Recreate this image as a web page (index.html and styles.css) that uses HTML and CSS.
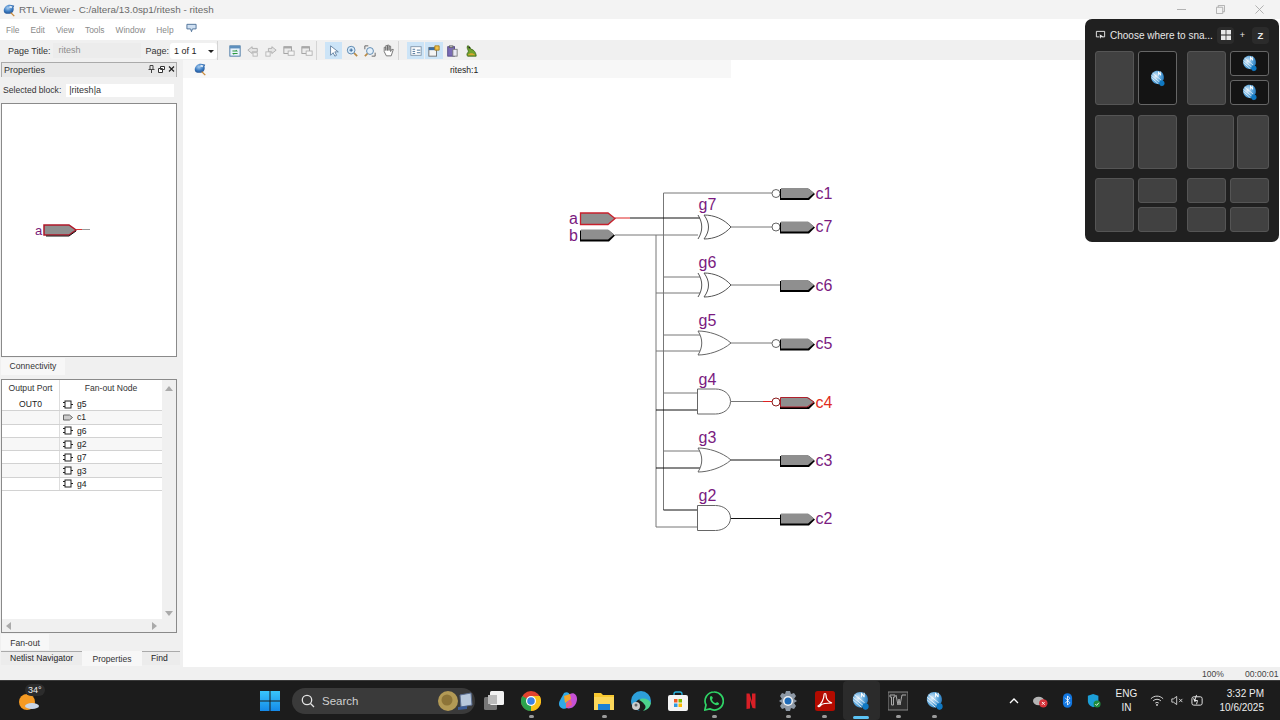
FILE: index.html
```html
<!DOCTYPE html>
<html lang="en">
<head>
<meta charset="utf-8">
<title>RTL Viewer</title>
<link rel="stylesheet" href="styles.css">
</head>
<body>
<svg class="defs" aria-hidden="true">
  <defs>
    <radialGradient id="globe" cx="40%" cy="35%" r="70%">
      <stop offset="0" stop-color="#a9cdf0"/><stop offset=".55" stop-color="#3f7fc4"/><stop offset="1" stop-color="#1c4a8c"/>
    </radialGradient>
    <radialGradient id="globeb" cx="35%" cy="35%" r="75%">
      <stop offset="0" stop-color="#e4f0fa"/><stop offset=".5" stop-color="#5ba6dc"/><stop offset="1" stop-color="#1669ae"/>
    </radialGradient>
    <linearGradient id="chip" x1="0" y1="0" x2="0" y2="1"><stop offset="0" stop-color="#39c6fb"/><stop offset="1" stop-color="#1489e8"/></linearGradient>
    <symbol id="bird" viewBox="0 0 16 16">
      <path d="M2 9c0-4 3-7 7-7 2 0 4 1 5 1l-1 2c1 2 0 6-3 7-4 1-8 0-8-3z" fill="url(#globe)"/>
      <path d="M9 3l3 1-1 2-3-1z" fill="#dbe8f6"/>
      <path d="M10 11l4 4" stroke="#c98a3a" stroke-width="1.6"/>
    </symbol>
    <symbol id="quartus" viewBox="0 0 20 22">
      <path d="M1 9c0-5 4-8 8-8 4 0 7 2 8 5 1 3 1 6-1 8l2 4-3 3-3-3c-6 1-11-3-11-9z" fill="url(#globeb)"/>
      <path d="M1.500 10l9 8M1.500 7l11 9M3 4l11 9" stroke="#fff" stroke-width="1" opacity=".85"/>
      <path d="M10 2v5h1V4.500l2 2.500h1V2h-1v3l-2-3z" fill="#fff"/>
      <circle cx="15" cy="17" r="3.400" fill="#0f78c2"/>
    </symbol>
    <symbol id="gate-ic" viewBox="0 0 10 9">
      <rect x="2" y="1" width="6" height="7" fill="#fff" stroke="#222" stroke-width="1"/>
      <path d="M0 2.500h2M0 6.500h2M8 4.500h2" stroke="#222" stroke-width="1"/>
    </symbol>
    <symbol id="port-ic" viewBox="0 0 10 7">
      <path d="M.5 1h6l3 2.500-3 2.500h-6z" fill="#ccc" stroke="#666"/>
    </symbol>
    <symbol id="tb-page" viewBox="0 0 14 14">
      <rect x="1" y="1" width="12" height="12" fill="#e8f2fb" stroke="#3d6f9e"/>
      <rect x="1" y="1" width="12" height="3" fill="#5d8fbe"/>
      <path d="M4 7h5l-1-1M10 10H5l1 1" stroke="#2d9a3d" stroke-width="1.200" fill="none"/>
    </symbol>
    <symbol id="tb-left" viewBox="0 0 14 14">
      <path d="M1 6l5-4v2h6v4H6v2z" fill="#e4e4e4" stroke="#aaa"/><rect x="7" y="9" width="5" height="4" fill="#f2f2f2" stroke="#b4b4b4"/>
    </symbol>
    <symbol id="tb-right" viewBox="0 0 14 14">
      <path d="M13 6L8 2v2H4v4h4v2z" fill="#e4e4e4" stroke="#aaa"/><rect x="1" y="8" width="5" height="5" fill="#f2f2f2" stroke="#b4b4b4"/>
    </symbol>
    <symbol id="tb-box" viewBox="0 0 14 14">
      <rect x="1" y="2" width="9" height="8" fill="#ececec" stroke="#999"/><rect x="1" y="2" width="9" height="2" fill="#a8a8a8"/><rect x="6" y="7" width="7" height="5" fill="#f5f5f5" stroke="#b0b0b0"/>
    </symbol>
    <symbol id="tb-cursor" viewBox="0 0 14 14">
      <path d="M3 1v11l3-3 2 4 2-1-2-4h4z" fill="#fff" stroke="#5b7a9a"/>
    </symbol>
    <symbol id="tb-zoomin" viewBox="0 0 14 14">
      <circle cx="6" cy="6" r="4.500" fill="#d9ebfa" stroke="#4d7da8"/><path d="M4 6h4M6 4v4" stroke="#24568a"/><path d="M9.500 9.500l3.500 3.500" stroke="#b98a45" stroke-width="2"/>
    </symbol>
    <symbol id="tb-zoomfit" viewBox="0 0 14 14">
      <circle cx="7" cy="7" r="4" fill="#e4f0fa" stroke="#4d7da8"/><path d="M1 5V1h4M13 9v4H9" stroke="#555" fill="none"/><path d="M4 10l-3 3" stroke="#b98a45" stroke-width="2"/>
    </symbol>
    <symbol id="tb-hand" viewBox="0 0 14 14">
      <path d="M3 8V4h1.500v3V2.500h1.500V7V2h1.500v5V3h1.500v5l1-2h1.500l-2 6H5z" fill="#fff" stroke="#666" stroke-width=".8"/>
    </symbol>
    <symbol id="tb-list" viewBox="0 0 14 14">
      <rect x="1" y="2" width="12" height="10" fill="#fff" stroke="#7b8fa3"/><path d="M3 5h3M3 7.500h3M3 10h3M8 6h4M8 9h4" stroke="#38658f"/>
    </symbol>
    <symbol id="tb-prop" viewBox="0 0 14 14">
      <rect x="1" y="3" width="9" height="10" fill="#f4f4f4" stroke="#666"/><rect x="1" y="3" width="9" height="3" fill="#3a6ea5"/><path d="M8 1h5v5H8z" fill="#f1c24a" stroke="#a47b1a"/>
    </symbol>
    <symbol id="tb-clip" viewBox="0 0 14 14">
      <rect x="2" y="2" width="8" height="11" fill="#7a6bb5" stroke="#4f4384"/><rect x="8" y="5" width="5" height="8" fill="#e9e9f4" stroke="#777"/><rect x="4" y="1" width="4" height="2" fill="#ccc" stroke="#666"/>
    </symbol>
    <symbol id="tb-frog" viewBox="0 0 14 14">
      <path d="M3 1c2 0 3 2 4 4 3 0 6 4 6 8H3c-2-3 1-4 1-6-1-2-2-4-1-6z" fill="#6fa32f" stroke="#3b6514"/><circle cx="5" cy="3" r="1" fill="#222"/><path d="M3 12c3-3 6-3 9 0z" fill="#d9a82e"/>
    </symbol>
  </defs>
</svg>

<div class="app">
  <header class="titlebar">
    <svg class="title-icon"><use href="#bird"/></svg>
    <span class="title-text">RTL Viewer - C:/altera/13.0sp1/ritesh - ritesh</span>
    <div class="win-controls">
      <svg class="win-btn" viewBox="0 0 10 10"><path d="M0 5h10" stroke="#aaa"/></svg>
      <svg class="win-btn" viewBox="0 0 10 10"><path d="M.5 2.500h7v7h-7zM2.500 2.500v-2h7v7h-2" fill="none" stroke="#aaa"/></svg>
      <svg class="win-btn" viewBox="0 0 10 10"><path d="M.5.500l9 9M9.500.500l-9 9" stroke="#aaa"/></svg>
    </div>
  </header>

  <nav class="menubar">
    <span>File</span><span>Edit</span><span>View</span><span>Tools</span><span>Window</span><span>Help</span>
    <svg class="menu-icon" viewBox="0 0 12 10"><path d="M1 1h10v5H7L6 9 5 6H1z" fill="#cfe0f2" stroke="#4b6f96"/></svg>
  </nav>

  <div class="toolbar">
    <div class="tb-group tb-page-title">
      <span class="tb-label">Page Title:</span>
      <span class="tb-field">ritesh</span>
      <span class="tb-label tb-page-label">Page:</span>
      <span class="tb-select">1 of 1<i class="caret"></i></span>
    </div>
    <div class="tb-group tb-nav">
      <svg class="tb-ic"><use href="#tb-page"/></svg>
      <svg class="tb-ic"><use href="#tb-left"/></svg>
      <svg class="tb-ic"><use href="#tb-right"/></svg>
      <svg class="tb-ic"><use href="#tb-box"/></svg>
      <svg class="tb-ic"><use href="#tb-box"/></svg>
    </div>
    <div class="tb-group tb-tools">
      <span class="tb-btn on"><svg class="tb-ic"><use href="#tb-cursor"/></svg></span>
      <span class="tb-btn"><svg class="tb-ic"><use href="#tb-zoomin"/></svg></span>
      <span class="tb-btn"><svg class="tb-ic"><use href="#tb-zoomfit"/></svg></span>
      <span class="tb-btn"><svg class="tb-ic big"><use href="#tb-hand"/></svg></span>
    </div>
    <div class="tb-group tb-views">
      <span class="tb-btn on"><svg class="tb-ic"><use href="#tb-list"/></svg></span>
      <span class="tb-btn on"><svg class="tb-ic"><use href="#tb-prop"/></svg></span>
      <span class="tb-btn"><svg class="tb-ic"><use href="#tb-clip"/></svg></span>
      <span class="tb-btn"><svg class="tb-ic"><use href="#tb-frog"/></svg></span>
    </div>
  </div>

  <main class="workspace">
    <aside class="sidebar">
      <div class="panel-head">
        <span>Properties</span>
        <span class="panel-btns">
          <svg viewBox="0 0 7 8"><path d="M2 .5h3v4H2zM.5 4.500h6M3.500 4.500V8" fill="none" stroke="#444"/></svg>
          <svg viewBox="0 0 7 8"><path d="M2.500 1.500h4v3h-4zM.5 3.500h4v4h-4z" fill="#fff" stroke="#333"/></svg>
          <svg viewBox="0 0 7 8"><path d="M1 1.500l5 5M6 1.500l-5 5" stroke="#222" stroke-width="1.200"/></svg>
        </span>
      </div>
      <div class="selected-row">
        <span>Selected block:</span>
        <span class="selected-field">|ritesh|a</span>
      </div>
      <div class="preview">
        <svg class="preview-svg" viewBox="0 0 174 252">
          <text x="33" y="131" class="pv-label">a</text>
          <path d="M42 121h25l7 5-7 5H42z" fill="#8f8f8f" stroke="#b0182a" stroke-width="1.500"/>
          <path d="M44 132h23l7-5" fill="none" stroke="#111"/>
          <path d="M74 125.500h14" stroke="#999"/>
          <path d="M74 125.500h6" stroke="#d33"/>
        </svg>
      </div>
      <div class="tab-row">
        <span class="tab-up">Connectivity</span>
      </div>
      <div class="table-box">
        <div class="table-main">
          <div class="table-scroll">
            <div class="t-head"><span class="c1">Output Port</span><span class="c2">Fan-out Node</span></div>
            <div class="t-row"><span class="c1">OUT0</span><span class="c2n"><svg class="node-ic"><use href="#gate-ic"/></svg>g5</span></div>
            <div class="t-row alt"><span class="c1"></span><span class="c2n"><svg class="node-ic"><use href="#port-ic"/></svg>c1</span></div>
            <div class="t-row"><span class="c1"></span><span class="c2n"><svg class="node-ic"><use href="#gate-ic"/></svg>g6</span></div>
            <div class="t-row alt"><span class="c1"></span><span class="c2n"><svg class="node-ic"><use href="#gate-ic"/></svg>g2</span></div>
            <div class="t-row"><span class="c1"></span><span class="c2n"><svg class="node-ic"><use href="#gate-ic"/></svg>g7</span></div>
            <div class="t-row alt"><span class="c1"></span><span class="c2n"><svg class="node-ic"><use href="#gate-ic"/></svg>g3</span></div>
            <div class="t-row"><span class="c1"></span><span class="c2n"><svg class="node-ic"><use href="#gate-ic"/></svg>g4</span></div>
          </div>
          <div class="v-scroll"><i class="arr-up"></i><i class="arr-down"></i></div>
        </div>
        <div class="h-scroll"><i class="arr-left"></i><i class="arr-right"></i></div>
      </div>
      <div class="tab-row tab-row-b">
        <span class="tab-up fanout">Fan-out</span>
      </div>
      <div class="bottom-tabs">
        <span class="btab">Netlist Navigator</span>
        <span class="btab active">Properties</span>
        <span class="btab">Find</span>
      </div>
    </aside>

    <section class="canvas">
      <div class="doc-tabs">
        <svg class="doc-icon"><use href="#bird"/></svg>
        <span class="doc-title">ritesh:1</span>
      </div>
      <svg class="schematic" viewBox="183 78 1097 589">
        <defs>
          <g id="port">
            <path d="M0 1h29l6 5-6 6H0z" fill="#000"/>
            <path d="M1 0h27l6 5-6 5H1z" fill="#8f8f8f"/>
          </g>
          <g id="bubble"><circle cx="4" cy="0" r="4" fill="#fff" stroke="#666"/></g>
          <g id="or-gate" fill="#fff" stroke="#666">
            <path d="M0 0c10 0 24 4 33 12C24 20 10 24 0 24c5-8 5-16 0-24z"/>
          </g>
          <g id="xor-gate" fill="none" stroke="#555">
            <path d="M6 0c10 0 20 4 27 12C26 20 16 24 6 24c6-8 6-16 0-24z" fill="#fff"/>
            <path d="M0 0c5 8 5 16 0 24"/>
          </g>
          <g id="and-gate" fill="#fff" stroke="#666">
            <path d="M0 0h18c8 0 15 5 15 12.500S26 25 18 25H0z"/>
          </g>
        </defs>

        <g class="wire">
          <path d="M656 235V527H697M663.500 193V510M663.500 193H772"/>
          <path d="M615 235H698M663.500 277H700M656 293H700M663.500 335H700M656 351H700M663.500 393H697"/>
          <path d="M663.500 451H700M731 227H772M731 285H780M731 343H772M731 401.500H764"/>
        </g>
        <g class="wire-dark">
          <path d="M630 218H700M656 410H697M656 468H700M663.500 510H697M731 460H780M731 518.500H780"/>
        </g>
        <path d="M615 218H630M763 401.500H772" class="wire-red"/>

        <use href="#xor-gate" x="698" y="215"/>
        <use href="#xor-gate" x="698" y="273"/>
        <use href="#or-gate" x="698" y="331"/>
        <use href="#and-gate" x="697.500" y="389"/>
        <use href="#or-gate" x="698" y="448"/>
        <use href="#and-gate" x="697.500" y="505.500"/>

        <use href="#bubble" x="772" y="193.500"/>
        <use href="#bubble" x="772" y="227"/>
        <use href="#bubble" x="772" y="343.500"/>
        <circle cx="776" cy="402" r="4" fill="#fff" stroke="#8c1c1c"/>

        <use href="#port" x="580" y="229.500"/>
        <use href="#port" x="780" y="188"/>
        <use href="#port" x="780" y="221.500"/>
        <use href="#port" x="780" y="280"/>
        <use href="#port" x="780" y="338.500"/>
        <use href="#port" x="780" y="397"/>
        <use href="#port" x="780" y="455"/>
        <use href="#port" x="780" y="513.500"/>
        <path d="M580.500 213H608l7 5.500-7 6H580.500z" fill="#8f8f8f" stroke="#c8202c" stroke-width="1.300"/>
        <path d="M780.500 397.500H807l7 4.500-7 5H780.500z" fill="none" stroke="#b0202c"/>

        <g class="lbl">
          <text x="569" y="224">a</text><text x="569" y="241">b</text>
          <text x="698.500" y="210">g7</text><text x="698.500" y="268">g6</text><text x="698.500" y="326">g5</text>
          <text x="698.500" y="385">g4</text><text x="698.500" y="443">g3</text><text x="698.500" y="501">g2</text>
          <text x="815.500" y="199">c1</text><text x="815.500" y="232">c7</text><text x="815.500" y="291">c6</text>
          <text x="815.500" y="349">c5</text><text x="815.500" y="407.500" class="lbl-red">c4</text><text x="815.500" y="466">c3</text><text x="815.500" y="524">c2</text>
        </g>
      </svg>
    </section>
  </main>

  <div class="statusbar">
    <span class="st-zoom">100%</span>
    <span class="st-time">00:00:01</span>
  </div>

  <footer class="taskbar">
    <div class="weather">
      <svg class="weather-ic" viewBox="0 0 22 20">
        <circle cx="9" cy="11" r="8" fill="#f59a23"/>
        <ellipse cx="14" cy="15" rx="7" ry="3" fill="#c9d6e8"/>
      </svg>
      <span class="weather-t">34°</span>
    </div>
    <svg class="tk-win" viewBox="0 0 20 20">
      <path d="M0 0h9.500v9.500H0zM10.500 0H20v9.500h-9.500zM0 10.500h9.500V20H0zM10.500 10.500H20V20h-9.500z" fill="url(#chip)"/>
    </svg>
    <div class="search">
      <svg class="search-ic" viewBox="0 0 14 14"><circle cx="6" cy="6" r="4.700" fill="none" stroke="#e4e4e4" stroke-width="1.300"/><path d="M9.500 9.500l3.500 3.500" stroke="#e4e4e4" stroke-width="1.300"/></svg>
      <span>Search</span>
      <span class="bing">
        <svg viewBox="0 0 36 22" class="bing-ic">
          <circle cx="11" cy="11" r="10" fill="#b39a55"/><circle cx="10" cy="10" r="5.500" fill="#8d7438"/>
          <path d="M23 5l11-2 1 12-11 2z" fill="#b8c8dc" stroke="#5c6f92"/><path d="M21 17l9-1v3l-9 1z" fill="#3c5c96"/>
        </svg>
      </span>
    </div>
    <div class="tk-apps">
      <span class="tk-app"><svg viewBox="0 0 20 20"><rect y="6" width="13" height="13" rx="1.500" fill="#777"/><rect x="6" width="14" height="14" rx="1.500" fill="#f2f2f2"/><rect x="4" y="4" width="9" height="9" fill="#bbb"/></svg></span>
      <span class="tk-app open"><svg viewBox="0 0 20 20"><circle cx="10" cy="10" r="10" fill="#e2442f"/><path d="M10 10v10a10 10 0 0 0 8.700-15H10z" fill="#f7c21a"/><path d="M10 10L1.300 5A10 10 0 0 0 10 20z" fill="#2ba24c"/><circle cx="10" cy="10" r="5" fill="#fff"/><circle cx="10" cy="10" r="3.800" fill="#3b82e6"/></svg></span>
      <span class="tk-app"><svg viewBox="0 0 20 20"><path d="M6 2c3-2 6 0 6 3l-3 12c-3 2-8 0-8-4 0-3 2-5 5-11z" fill="#2fa9e8"/><path d="M12 3c4-2 7 1 7 5 0 3-2 8-6 9-3 1-5 0-5-1z" fill="#c651d6"/><path d="M6 5l6-2 1 5-6 4z" fill="#f4a52d"/><path d="M8 12l5-3 1 5-6 3z" fill="#ee5f7f"/></svg></span>
      <span class="tk-app open"><svg viewBox="0 0 20 20"><path d="M0 2h7l2 2h11v15H0z" fill="#f8c830"/><path d="M0 6h20v13H0z" fill="#fbd75b"/><rect x="4" y="13" width="12" height="6" fill="#1a7fd4"/></svg></span>
      <span class="tk-app"><svg viewBox="0 0 20 20"><path d="M0 10a10 10 0 0 1 20 0c0 3-3 4-6 4 2-2 1-6-3-6-5 0-7 3-6 7 1 3 3 5 6 5C5 20 0 16 0 10z" fill="#2d9fd9"/><path d="M8 9c4-3 10-1 12 3-1 5-4 7-8 8 2-2 4-4 1-7-1-2-3-3-5-4z" fill="#4cd28c"/><circle cx="5" cy="15" r="4" fill="#ccc"/><circle cx="5" cy="14" r="1.500" fill="#666"/></svg></span>
      <span class="tk-app"><svg viewBox="0 0 20 20"><path d="M6 5V3a2 2 0 0 1 2-2h4a2 2 0 0 1 2 2v2" fill="none" stroke="#28b4e0" stroke-width="1.300"/><rect y="4" width="20" height="16" rx="2" fill="#f4f4f4"/><rect x="6" y="8" width="3.500" height="3.500" fill="#f15a24"/><rect x="10.500" y="8" width="3.500" height="3.500" fill="#7fba00"/><rect x="6" y="12.500" width="3.500" height="3.500" fill="#2f9ae0"/><rect x="10.500" y="12.500" width="3.500" height="3.500" fill="#fdb900"/></svg></span>
      <span class="tk-app open"><svg viewBox="0 0 20 20"><path d="M10 1a9 9 0 0 0-8 13l-1.200 5 5-1.200A9 9 0 1 0 10 1z" fill="#1a1a1a" stroke="#2fd366" stroke-width="1.700"/><path d="M6 6c1-2 2-1 3 1l-1 1c0 2 2 4 4 4l1-1c2 1 3 2 1 3-4 1-9-4-8-8z" fill="#2fd366"/></svg></span>
      <span class="tk-app"><svg viewBox="0 0 20 20"><path d="M5.500 2.500h3l2.500 8v-8h3.500v15c-1 0-2-.3-3-.5l-2.500-8v8.500l-3.500.5z" fill="#d81f26"/></svg></span>
      <span class="tk-app open"><svg viewBox="0 0 20 20"><path d="M8 0h4l1 3 3-1 2 3-2 3 3 2-3 2 2 3-2 3-3-1-1 3H8l-1-3-3 1-2-3 2-3-3-2 3-2-2-3 2-3 3 1z" fill="#8e99a6"/><circle cx="10" cy="10" r="5" fill="#f2f2f2"/><circle cx="10" cy="10" r="3.500" fill="#1f6bb8"/></svg></span>
      <span class="tk-app open"><svg viewBox="0 0 20 20"><rect width="20" height="20" rx="2.500" fill="#b30b00"/><path d="M3 15c3-1 6-7 6-11 0-2 2-2 2 0 0 4 3 7 6 8-4 0-9 0-11 2-1 2-3 2-3 1z" fill="none" stroke="#fff" stroke-width="1.200"/></svg></span>
      <span class="tk-app active"><svg viewBox="0 0 20 22"><use href="#quartus"/></svg><i class="active-bar"></i></span>
      <span class="tk-app open"><svg viewBox="0 0 20 20"><rect y="1" width="20" height="18" fill="#2c2c2c" stroke="#888"/><path d="M2 4h5v2H5.500v8h-2V6H2zM8 4l2 10 1-6 1 6 2-10h4" fill="none" stroke="#aaa"/></svg></span>
      <span class="tk-app open"><svg viewBox="0 0 20 22"><use href="#quartus"/></svg></span>
    </div>
    <div class="tray">
      <svg class="tray-chev" viewBox="0 0 10 6"><path d="M1 5l4-4 4 4" fill="none" stroke="#fff" stroke-width="1.300"/></svg>
      <svg class="tray-ic tray-cloud" viewBox="0 0 16 14"><ellipse cx="6" cy="7" rx="6" ry="4.500" fill="#b4b4b4"/><circle cx="11" cy="9.500" r="4.500" fill="#d5333a"/><path d="M9.500 8l3 3M12.500 8l-3 3" stroke="#fff"/></svg>
      <svg class="tray-ic tray-bt" viewBox="0 0 12 16"><rect x="1" width="10" height="16" rx="5" fill="#1277e1"/><path d="M3.500 5l5 5.500L6 13V3l2.500 2.500-5 5.500" fill="none" stroke="#fff" stroke-width=".9"/></svg>
      <svg class="tray-ic tray-shield" viewBox="0 0 16 16"><path d="M1 2l6-2 6 2v6c0 4-3 6-6 7-3-1-6-3-6-7z" fill="#1c9fd8"/><circle cx="11.500" cy="11.500" r="4" fill="#1f8a3c"/><path d="M9.500 11.500l1.500 1.500 2.500-3" fill="none" stroke="#fff"/></svg>
      <span class="lang">ENG<br>IN</span>
      <svg class="tray-ic tray-wifi" viewBox="0 0 16 12"><path d="M1 4c4-4 10-4 14 0M3.500 6.500c2.500-2.500 6.500-2.500 9 0M6 9c1-1 3-1 4 0" fill="none" stroke="#eee"/><circle cx="8" cy="11" r="1" fill="#eee"/></svg>
      <svg class="tray-ic tray-vol" viewBox="0 0 16 12"><path d="M1 4h2l4-3v10L3 8H1z" fill="none" stroke="#eee"/><path d="M10 4l4 4M14 4l-4 4" stroke="#eee"/></svg>
      <svg class="tray-ic tray-batt" viewBox="0 0 14 14"><rect x="1" y="3" width="11" height="9" rx="2" fill="none" stroke="#eee"/><path d="M2 4l4 3-2 2z" fill="#eee"/><path d="M6 1l-2 6h3l-1 4" fill="none" stroke="#eee"/></svg>
      <div class="clock"><span>3:32 PM</span><span>10/6/2025</span></div>
    </div>
  </footer>

  <div class="snap">
    <div class="snap-head">
      <svg class="snap-ic" viewBox="0 0 12 11"><path d="M1.500 1h9v6h-3M5 7H1.500V1" fill="none" stroke="#eee"/><path d="M5 4l1 5 1-2 2-.5z" fill="#eee"/></svg>
      <span class="snap-title">Choose where to sna...</span>
      <span class="key"><svg class="key-win" viewBox="0 0 10 10"><path d="M0 0h4.600v4.600H0zM5.400 0H10v4.600H5.400zM0 5.400h4.600V10H0zM5.400 5.400H10V10H5.400z" fill="#e8e8e8"/></svg></span>
      <span class="plus">+</span>
      <span class="key">Z</span>
    </div>
    <div class="snap-grid">
      <div class="layout l-even">
        <div class="tile"></div>
        <div class="tile dark"><svg class="tile-ic"><use href="#quartus"/></svg></div>
      </div>
      <div class="layout l-stack">
        <div class="tile span2"></div>
        <div class="tile dark"><svg class="tile-ic"><use href="#quartus"/></svg></div>
        <div class="tile dark"><svg class="tile-ic"><use href="#quartus"/></svg></div>
      </div>
      <div class="layout l-even">
        <div class="tile"></div>
        <div class="tile"></div>
      </div>
      <div class="layout l-wide">
        <div class="tile"></div>
        <div class="tile"></div>
      </div>
      <div class="layout l-stack">
        <div class="tile span2"></div>
        <div class="tile"></div>
        <div class="tile"></div>
      </div>
      <div class="layout l-stack">
        <div class="tile"></div>
        <div class="tile"></div>
        <div class="tile"></div>
        <div class="tile"></div>
      </div>
    </div>
  </div>
</div>
</body>
</html>
```

FILE: styles.css
```css
* { box-sizing: border-box; }
html, body { margin: 0; padding: 0; }
body {
  width: 1280px;
  height: 720px;
  overflow: hidden;
  font-family: "Liberation Sans", Arial, sans-serif;
  font-size: 9px;
  color: #222;
  background: #fff;
}
.defs { position: absolute; width: 0; height: 0; }
.app { position: relative; width: 1280px; height: 720px; display: flex; flex-direction: column; }

/* title bar */
.titlebar { height: 19px; flex: none; background: #f3f3f3; display: flex; align-items: center; padding-left: 2px; }
.title-icon { width: 14px; height: 14px; margin-right: 3px; }
.title-text { font-size: 9.900px; color: #6a6a6a; }
.win-controls { margin-left: auto; width: 87px; margin-right: 16px; display: flex; justify-content: space-between; }
.win-btn { width: 9px; height: 9px; }

/* menu */
.menubar { height: 21px; flex: none; background: #fff; display: flex; align-items: center; padding-left: 6px; gap: 11px; font-size: 8.400px; color: #8a8a8a; }
.menu-icon { width: 11px; height: 10px; margin-top: -3px; margin-left: 1px; }

/* toolbar */
.toolbar { height: 20px; flex: none; background: #f0f0f0; display: flex; align-items: center; padding-top: 1px; }
.tb-group { display: flex; align-items: center; height: 19px; border-right: 1px solid #d4d4d4; }
.tb-page-title { width: 218px; padding-left: 8px; }
.tb-label { font-size: 9px; color: #333; white-space: nowrap; flex: none; }
.tb-field { width: 88px; flex: none; height: 15px; margin-left: 2px; padding-left: 6px; background: #ececec; color: #8c8c8c; line-height: 15px; }
.tb-page-label { margin-left: 5px; }
.tb-select { position: relative; flex: none; width: 47px; height: 16px; margin-left: 1px; padding-left: 4px; background: #fff; border-radius: 3px; line-height: 16px; font-size: 9px; }
.caret { position: absolute; right: 3px; top: 7px; border: 3px solid transparent; border-top-color: #222; border-bottom: 0; }
.tb-nav { width: 99px; padding-left: 11px; gap: 6px; }
.tb-ic { width: 12px; height: 12px; display: block; flex: none; }
.tb-ic.big { width: 15px; height: 15px; }
.tb-tools { width: 82px; padding-left: 8px; gap: 1px; }
.tb-views { padding-left: 8px; gap: 1px; border-right: 0; }
.tb-btn { width: 17.300px; height: 17px; display: flex; align-items: center; justify-content: center; }
.tb-btn.on { background: #cce4f7; }

/* workspace */
.workspace { flex: 1; min-height: 0; display: flex; }
.sidebar { width: 183px; flex: none; background: #f0f0f0; display: flex; flex-direction: column; padding: 2px 0 0 1px; }
.panel-head { width: 176px; height: 15px; background: #e8e8e8; border: 1px solid #aaa; border-width: 1px 1px 0 1px; padding: 2px 0 0 2px; font-size: 9px; color: #333; display: flex; justify-content: space-between; line-height: 11px; }
.panel-btns { display: flex; gap: 3px; margin: 0 1px 0 0; height: 8px; }
.panel-btns svg { width: 7px; height: 8px; }
.selected-row { height: 26px; display: flex; align-items: center; padding-left: 2px; font-size: 8.600px; color: #333; }
.selected-field { width: 108px; height: 13px; margin-left: 5px; padding-left: 3px; background: #fff; line-height: 13px; font-size: 9px; }
.preview { width: 176px; height: 254px; background: #fff; border: 1px solid #8a8a8a; flex: none; }
.preview-svg { display: block; width: 174px; height: 252px; }
.pv-label { font-size: 13px; fill: #7a1a7a; }
.tab-row { height: 22px; flex: none; padding-top: 1px; }
.tab-up { display: inline-block; width: 64px; height: 17px; line-height: 16px; text-align: center; background: #f7f7f7; font-size: 8.600px; color: #333; }
.table-box { width: 176px; height: 254px; flex: none; background: #f0f0f0; border: 1px solid #8a8a8a; display: flex; flex-direction: column; }
.table-main { flex: 1; display: flex; min-height: 0; }
.table-scroll { width: 160px; flex: none; background: #fff; }
.t-head { height: 18px; display: flex; line-height: 17px; font-size: 8.600px; text-align: center; color: #333; }
.t-row { height: 13.300px; display: flex; line-height: 12px; font-size: 8.600px; border-bottom: 1px solid #d2d2d2; }
.t-row.alt { background: #f7f7f7; }
.c1 { width: 58px; flex: none; text-align: center; border-right: 1px solid #ddd; }
.c2 { flex: 1; }
.c2n { flex: 1; display: flex; align-items: center; padding-left: 3px; gap: 4px; }
.node-ic { width: 10px; height: 9px; flex: none; }
.v-scroll { flex: 1; display: flex; flex-direction: column; justify-content: space-between; align-items: center; padding: 6px 0 3px; }
.h-scroll { height: 13px; flex: none; display: flex; justify-content: space-between; align-items: center; padding: 0 19px 0 4px; }
.arr-up { border: 4px solid transparent; border-bottom: 5px solid #aaa; border-top: 0; }
.arr-down { border: 4px solid transparent; border-top: 5px solid #aaa; border-bottom: 0; }
.arr-left { border: 4px solid transparent; border-right: 5px solid #aaa; border-left: 0; }
.arr-right { border: 4px solid transparent; border-left: 5px solid #aaa; border-right: 0; }
.tab-row-b { height: 18px; padding: 1px 0 0; }
.fanout { width: 48px; height: 16px; line-height: 18px; }
.bottom-tabs { display: flex; height: 15px; flex: none; font-size: 8.600px; color: #222; }
.btab { padding: 0 9px; height: 14px; line-height: 12px; background: #ececec; border-top: 1px solid #aaa; }
.btab:first-child { width: 81px; padding: 0 0 0 9px; }
.btab.active { width: 60px; padding: 0; text-align: center; background: #f7f7f7; border-top: 0; height: 15px; line-height: 16px; color: #333; }
.btab:last-child { width: 38px; }

/* canvas */
.canvas { flex: 1; min-width: 0; display: flex; flex-direction: column; background: #fff; }
.doc-tabs { width: 548px; height: 18px; flex: none; background: #f7f7f7; display: flex; align-items: center; padding-left: 10px; position: relative; }
.doc-icon { width: 14px; height: 14px; }
.doc-title { position: absolute; left: 267px; top: 5px; font-size: 8.600px; color: #222; }
.schematic { display: block; width: 1097px; height: 589px; }
.wire path { fill: none; stroke: #777; stroke-width: 1; }
.wire-dark path { fill: none; stroke: #111; stroke-width: 1; }
.wire-red { fill: none; stroke: #d22; stroke-width: 1; }
.lbl text { font-size: 16px; fill: #7a1a80; font-family: "Liberation Sans", Arial, sans-serif; }
.lbl text.lbl-red { fill: #e02b20; }

/* status */
.statusbar { height: 13px; flex: none; background: #f0f0f0; font-size: 8.600px; color: #444; display: flex; line-height: 15px; }
.st-zoom { margin-left: 1202px; }
.st-time { margin-left: 21px; }

/* taskbar */
.taskbar { height: 40px; flex: none; background: #1c1c1c; border-top: 1px solid #3a3a3a; display: flex; align-items: center; position: relative; color: #eee; }
.weather { width: 260px; flex: none; position: relative; height: 39px; }
.weather-ic { position: absolute; left: 18px; top: 10px; width: 22px; height: 20px; }
.weather-t { position: absolute; left: 25px; top: 3px; background: #2c2c2c; border-radius: 8px; padding: 1px 3px; font-size: 9px; }
.tk-win { width: 20px; height: 20px; flex: none; }
.search { width: 183px; height: 26px; margin-left: 12px; background: #3a3a3a; border-radius: 13px; flex: none; display: flex; align-items: center; padding-left: 9px; font-size: 11.500px; color: #cfcfcf; gap: 7px; }
.search-ic { width: 14px; height: 14px; }
.bing { margin-left: auto; margin-right: 2px; display: flex; }
.bing-ic { width: 36px; height: 22px; }
.tk-apps { display: flex; margin-left: 1px; }
.tk-app { width: 36.700px; height: 39px; display: flex; align-items: center; justify-content: center; position: relative; flex: none; }
.tk-app svg { width: 20px; height: 20px; }
.tk-app.open::after { content: ""; position: absolute; left: 16px; bottom: 2px; width: 5px; height: 3px; border-radius: 2px; background: #9a9a9a; }
.tk-app.active { background: #2b2b2b; border-radius: 4px; }
.active-bar { position: absolute; left: 10px; bottom: 1px; width: 16px; height: 3px; border-radius: 2px; background: #5cc4f5; }
.tray { flex: 1; display: flex; align-items: center; position: relative; height: 39px; }
.tray-chev { width: 10px; height: 6px; margin-left: 56px; }
.tray-ic { flex: none; }
.tray-cloud { width: 15px; height: 14px; margin-left: 14px; }
.tray-bt { width: 11px; height: 15px; margin-left: 14px; }
.tray-shield { width: 14px; height: 14px; margin-left: 14.500px; }
.lang { width: 30px; margin-left: 10px; text-align: center; font-size: 10px; line-height: 14px; }
.tray-wifi { width: 14px; height: 11px; margin-left: 9px; }
.tray-vol { width: 13px; height: 11px; margin-left: 6.500px; }
.tray-batt { width: 13px; height: 13px; margin-left: 7px; }
.clock { margin-left: auto; margin-right: 16px; display: flex; flex-direction: column; align-items: flex-end; font-size: 10px; line-height: 14px; }

/* snap flyout */
.snap { position: absolute; left: 1085px; top: 19px; width: 194px; height: 223px; background: #202020; border-radius: 7px; padding: 0 10px; color: #e8e8e8; }
.snap-head { height: 32px; display: flex; align-items: center; font-size: 10px; }
.snap-ic { width: 11px; height: 11px; margin-right: 4px; flex: none; }
.snap-title { flex: none; width: 105px; white-space: nowrap; }
.key { width: 17px; height: 17px; margin-left: 2px; border-radius: 4px; background: #2b2b2b; display: flex; align-items: center; justify-content: center; font-size: 9.500px; font-weight: bold; flex: none; }
.key-win { width: 10px; height: 10px; }
.plus { width: 15px; margin-left: 1px; text-align: center; font-size: 9px; }
.snap-grid { display: grid; grid-template-columns: 82px 82px; grid-template-rows: 54px 54px 54px; column-gap: 10px; row-gap: 9.500px; }
.layout { display: grid; gap: 4px; }
.l-even { grid-template-columns: 1fr 1fr; }
.l-stack { grid-template-columns: 1fr 1fr; grid-template-rows: 1fr 1fr; }
.l-wide { grid-template-columns: 47px 32px; gap: 3px; }
.span2 { grid-row: span 2; }
.tile { background: #414141; border: 1px solid #555; border-radius: 3px; }
.tile.dark { background: #141414; border-color: #666; display: flex; align-items: center; justify-content: center; }
.tile-ic { width: 16px; height: 17px; }
```
